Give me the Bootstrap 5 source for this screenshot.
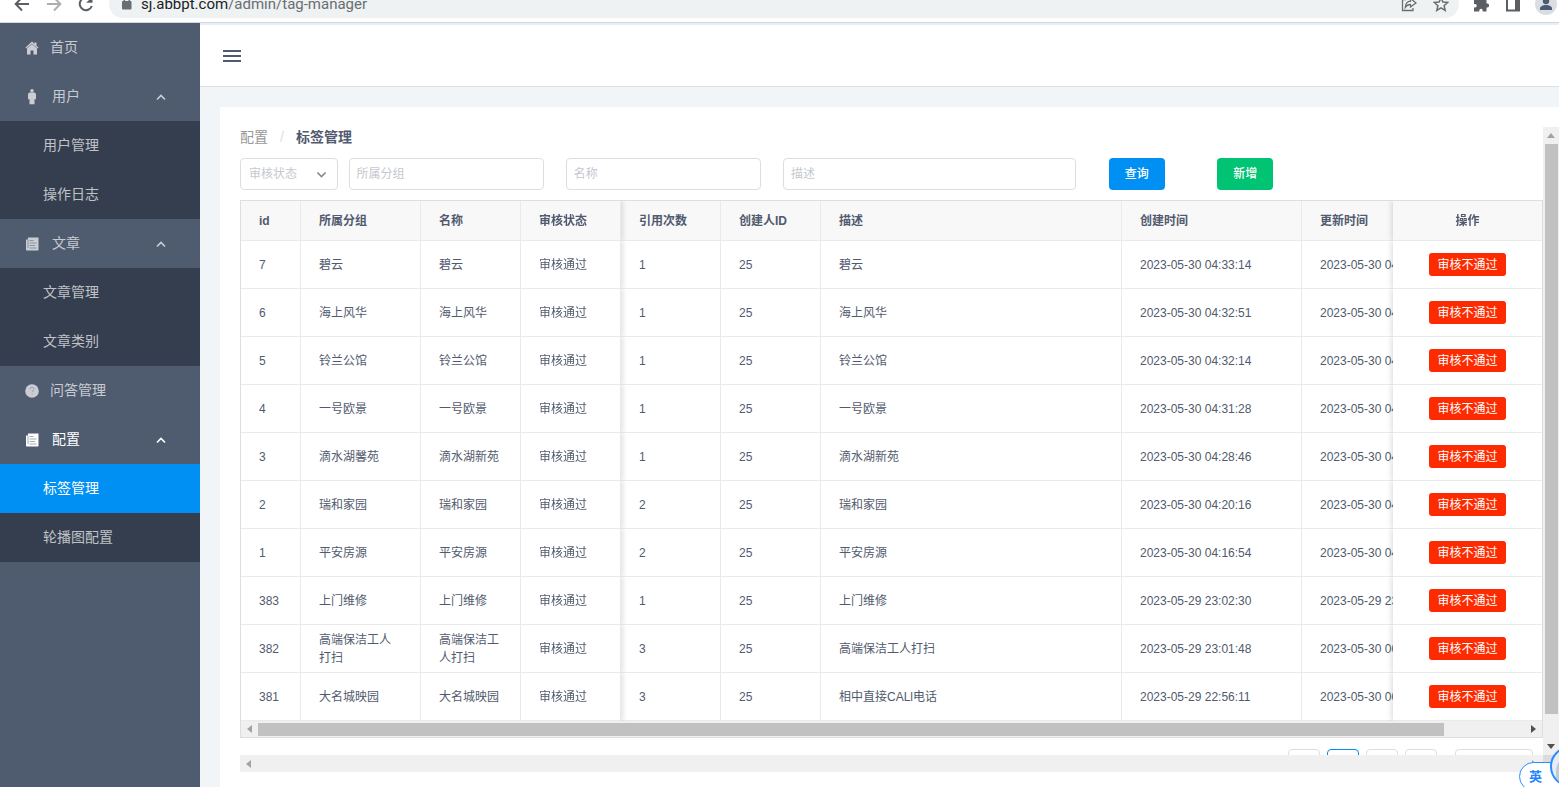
<!DOCTYPE html>
<html lang="zh-CN">
<head>
<meta charset="utf-8">
<meta name="viewport" content="width=device-width, initial-scale=1">
<title>标签管理</title>
<link href="https://cdn.jsdelivr.net/npm/bootstrap@5.3.0/dist/css/bootstrap.min.css" rel="stylesheet">
<style>
:root{--side:#4f5b6f;--side-sub:#343e4e;--blue:#008ff3;--line:#dcdee2;--cell:#e8eaec;--ink:#515a6e;--track:#f0f0f0;--thumb:#c1c1c1}
body{font-family:"Liberation Sans","Noto Sans CJK SC",sans-serif;font-size:14px;line-height:20px;color:var(--ink)}
svg{display:block;flex:none}
.shell{height:100vh}
/* browser toolbar */
.toolbar{height:23px;border-bottom:1px solid #d5d6d8;color:#5b5f64;padding:0 2px 4px 13px;gap:14px}
.toolbar button{background:none;border:0;padding:0;color:inherit}
.toolbar .tool{height:28px;display:flex;align-items:center;flex:none}
.omnibox{height:28px;background:#eef2f3;border-radius:14px;padding:0 10px 0 12px;font:15px/16px Roboto,sans-serif;color:#6a6e72}
.omnibox b{font-weight:400;color:#202124}
.avatar{width:22px;height:22px;background:#dadde2;color:#495a71}
/* side menu */
.side{width:200px;background:var(--side)}
.side a{display:flex;align-items:center;height:49px;padding:0 33px 1px 24px;color:rgba(255,255,255,.7);text-decoration:none}
.side a svg:first-child{margin-right:10px}
.side a.group svg:first-child{margin-right:12px}
.side .sub{background:var(--side-sub)}
.side .sub a{padding-left:43px}
.side .group.open{color:#fff}
.side .sub a.active{background:var(--blue);color:#fff}
/* page */
.page-main{background:#f2f5f8}
.top-bar{height:64px;background:#fff;border-top:2px solid #e3f0fb;border-bottom:1px solid #dcdee2;padding-left:23px}
.panel-box{margin:20px 0 0 20px;padding:20px 0 15px 20px}
.breadcrumb{font-size:14px;line-height:20px;margin-bottom:11px;--bs-breadcrumb-divider-color:#dcdee2;--bs-breadcrumb-item-padding-x:12px}
.breadcrumb a{color:#999;text-decoration:none}
.breadcrumb .active{color:var(--ink);font-weight:700}
.breadcrumb .active::before{font-weight:400}
.filters{margin-bottom:10px}
.filters .form-control,.filters .form-select{width:90%;height:32px;font-size:12px;line-height:20px;padding:5px 7px;border-color:var(--line);border-radius:4px;color:var(--ink)}
.filters .form-select{color:#c5c8ce;padding-left:8px;background-position:right 10px center;background-size:11px;--bs-form-select-bg-img:url("data:image/svg+xml,%3csvg xmlns='http://www.w3.org/2000/svg' viewBox='0 0 16 16'%3e%3cpath fill='none' stroke='%23808695' stroke-width='2.2' d='m2 5 6 6 6-6'/%3e%3c/svg%3e")}
.filters ::placeholder{color:#c5c8ce}
.filters .btn{width:56px;height:32px;font-size:12px;line-height:20px;padding:0;border:0;border-radius:4px;color:#fff;font-weight:500}
.btn-find{background:var(--blue)}
.btn-new{background:#00c373}
.grid-box{border:1px solid var(--line);border-bottom:0}
.grid-scroll{overflow-x:hidden}
.grid{width:100%;min-width:1390px;table-layout:fixed;border-collapse:separate;border-spacing:0;font-size:12px;line-height:18px}
.grid th,.grid td{height:48px;padding:0 18px;border-right:1px solid var(--cell);border-bottom:1px solid var(--cell);background:#fff;vertical-align:middle}
.grid th{height:40px;background:#f8f8f9;font-weight:700}
.grid .pin{position:sticky;z-index:1}
.grid .pin-1{left:0}.grid .pin-2{left:60px}.grid .pin-3{left:180px}.grid .pin-4{left:280px;box-shadow:2px 0 5px rgba(0,0,0,.12);clip-path:inset(0 -8px 0 0)}
.grid .pin-end{right:0;padding:0;border-right:0;text-align:center;box-shadow:-2px 0 5px rgba(0,0,0,.12);clip-path:inset(0 0 0 -8px)}
.grid .btn{background:#ff2b00;color:#fff;font-size:12px;line-height:17px;padding:4px 8px 2px;border:0;border-radius:3px}
.bar-h{height:17px;background:var(--track);color:#a3a3a3}
.bar-h .arrow{width:17px;display:flex;justify-content:center}
.bar-h .thumb{height:13px;background:var(--thumb)}
.bar-inner{border-bottom:1px solid var(--line)}
.dark-arrow{color:#505050}
.bar-v{width:16px;background:var(--track);color:#a3a3a3}
.bar-v .arrow{height:17px;display:flex;align-items:center}
.bar-v .thumb{width:13px;flex:0 1 570px;background:var(--thumb)}
.corner{width:16px;background:#dcdcdc}
.pager{margin-top:11px;padding-right:10px;gap:7px}
.pager .page-btn{width:32px;height:32px;border:1px solid var(--line);border-radius:4px;background:#fff;padding:0}
.pager .page-btn.current{border-color:var(--blue)}
.pager select{width:78px;height:32px;margin-left:11px;border:1px solid var(--line);border-radius:4px;background:#fff;appearance:none}
/* input method badge */
.ime{right:-10px;bottom:-4px;width:50px;height:29px;border:1px solid #2a8cff;border-radius:15px;background:#fff;color:#1f86ff;font-size:13px;font-weight:700;line-height:27px;padding-left:9px}
.ime-face{right:-32px;bottom:0;width:41px;height:41px;border:2px solid #2a8cff;border-radius:50%;background:#e9edf3}
</style>
</head>
<body>
<div class="shell d-flex flex-column overflow-hidden position-relative">
  <header class="toolbar d-flex align-items-end overflow-hidden flex-shrink-0 bg-white">
    <button class="tool" aria-label="后退"><svg width="18" height="18" viewBox="0 0 18 18" fill="none" stroke="currentColor" stroke-width="2"><path d="M16 9H3M9 2.500 2.700 9 9 15.500"/></svg></button>
    <button class="tool opacity-50" aria-label="前进"><svg width="18" height="18" viewBox="0 0 18 18" fill="none" stroke="currentColor" stroke-width="2"><path d="M2 9h13M9 2.500 15.300 9 9 15.500"/></svg></button>
    <button class="tool" aria-label="刷新"><svg width="18" height="18" viewBox="0 0 18 18" fill="none" stroke="currentColor" stroke-width="2"><path d="M14.800 11A6.200 6.200 0 1 1 13.500 4.700"/><path d="M15.500 1.500v6.300H9.200z" fill="currentColor" stroke="none"/></svg></button>
    <div class="omnibox d-flex align-items-center flex-grow-1">
      <svg width="12" height="16" viewBox="0 0 12 16"><rect x="1" y="5" width="9.500" height="8.500" rx="1" fill="currentColor"/><path d="M3.300 5V3a2.500 2.500 0 0 1 5 0v2" fill="none" stroke="currentColor" stroke-width="1.500"/></svg>
      <span class="ms-2 flex-grow-1"><b>sj.abbpt.com</b>/admin/tag-manager</span>
      <svg class="me-3" width="16" height="18" viewBox="0 0 16 18" fill="none" stroke="currentColor" stroke-width="1.300"><path d="M5 4.500H1.500V15.500H12V13"/><path d="M9.500 3.500 15 8l-5.500 4V9.500C7 9.300 5.500 10.500 4.300 12.300 4.500 9 6.500 6.500 9.500 6.200z"/></svg>
      <svg width="16" height="18" viewBox="0 0 16 18" fill="none" stroke="currentColor" stroke-width="1.500"><path d="m8 2.700 1.900 4.400 4.800.4-3.600 3.200 1.100 4.700L8 12.900l-4.200 2.500 1.100-4.700L1.300 7.500l4.800-.4z"/></svg>
    </div>
    <button class="tool" aria-label="扩展程序"><svg width="16" height="18" viewBox="0 0 16 18" fill="currentColor"><path d="M1 4.500h4.500V3.300a2 2 0 0 1 4 0v1.200H13.500V8.500h.6a2 2 0 0 1 0 4h-.6v4H9.700v-1a1.700 1.700 0 0 0-3.400 0v1H1v-4h1a1.700 1.700 0 0 0 0-3.600H1z"/></svg></button>
    <button class="tool" aria-label="侧边栏"><svg width="18" height="18" viewBox="0 0 18 18"><path fill="currentColor" fill-rule="evenodd" d="M3 2.500h14v14H3zM5 4.500v10h7v-10z"/></svg></button>
    <div class="tool"><div class="avatar rounded-circle"><svg width="22" height="22" viewBox="0 0 22 22" fill="currentColor"><circle cx="11" cy="8" r="3.200"/><path d="M5 17v-1.500c0-2 3-3.500 6-3.500s6 1.500 6 3.500V17z"/></svg></div></div>
  </header>

  <div class="d-flex flex-grow-1" style="min-height:0">
    <nav class="side flex-shrink-0" aria-label="主菜单">
      <a href="#"><svg width="16" height="16" viewBox="0 0 16 16" fill="currentColor"><path d="M8 2.500 1.500 8.500l.8 1L8 4.500l5.700 5 .8-1-2-1.800V3.500h-2v1.300z"/><path d="M3 9.500 8 5l5 4.500v6H9.500V11.500H6.500v4H3z"/></svg>首页</a>
      <a href="#" class="group"><svg width="16" height="17" viewBox="0 0 16 17" fill="currentColor"><circle cx="8" cy="2.700" r="1.700"/><path d="M5.500 4.600h5L12 5.800v5.500h-1.500v5h-5v-5H4V5.800z"/></svg>用户<svg class="ms-auto" width="12" height="12" viewBox="0 0 12 12" fill="none" stroke="currentColor" stroke-width="1.600"><path d="m2 9.500 4-4 4 4"/></svg></a>
      <div class="sub"><a href="#">用户管理</a><a href="#">操作日志</a></div>
      <a href="#" class="group"><svg width="16" height="16" viewBox="0 0 16 16"><path fill="currentColor" d="M4 2.500h10.500V15l-.5.500H2.500L2 15V4.500h2z"/><path d="M4 4.500V13M5.500 5.500h4M5.500 8h7M5.500 10.500H11M5.500 13h7" fill="none" stroke="#8d95a2"/></svg>文章<svg class="ms-auto" width="12" height="12" viewBox="0 0 12 12" fill="none" stroke="currentColor" stroke-width="1.600"><path d="m2 9.500 4-4 4 4"/></svg></a>
      <div class="sub"><a href="#">文章管理</a><a href="#">文章类别</a></div>
      <a href="#"><svg width="16" height="16" viewBox="0 0 16 16"><circle cx="8" cy="9" r="6.800" fill="currentColor"/><path d="M6 7.300c0-2.600 4-2.600 4 0 0 1.400-1.800 1.500-1.800 3M8.200 11.500v1.300" fill="none" stroke="#a3aab5" stroke-width="1.100"/></svg>问答管理</a>
      <a href="#" class="group open"><svg width="16" height="16" viewBox="0 0 16 16"><path fill="currentColor" d="M4 2.500h10.500V15l-.5.500H2.500L2 15V4.500h2z"/><path d="M4 4.500V13M5.500 5.500h4M5.500 8h7M5.500 10.500H11M5.500 13h7" fill="none" stroke="#a4abb6"/></svg>配置<svg class="ms-auto" width="12" height="12" viewBox="0 0 12 12" fill="none" stroke="currentColor" stroke-width="1.600"><path d="m2 9.500 4-4 4 4"/></svg></a>
      <div class="sub"><a href="#" class="active">标签管理</a><a href="#">轮播图配置</a></div>
    </nav>

    <main class="page-main d-flex flex-column flex-grow-1" style="min-width:0">
      <div class="top-bar d-flex align-items-center flex-shrink-0">
        <button class="btn p-0 border-0" aria-label="折叠菜单"><svg width="18" height="14" viewBox="0 0 18 14" fill="#515a6e"><path d="M0 1h18v2H0zM0 6h18v2H0zM0 11h18v2H0z"/></svg></button>
      </div>
      <section class="panel-box bg-white d-flex flex-column flex-grow-1" style="min-height:0">
        <div class="d-flex flex-grow-1" style="min-height:0">
          <div class="flex-grow-1 overflow-hidden" style="min-width:0">
            <ol class="breadcrumb"><li class="breadcrumb-item"><a href="#">配置</a></li><li class="breadcrumb-item active" aria-current="page">标签管理</li></ol>
            <form class="filters row g-0">
              <div class="col-1"><select class="form-select" aria-label="审核状态"><option>审核状态</option></select></div>
              <div class="col-2"><input class="form-control" type="text" placeholder="所属分组" aria-label="所属分组"></div>
              <div class="col-2"><input class="form-control" type="text" placeholder="名称" aria-label="名称"></div>
              <div class="col-3"><input class="form-control" type="text" placeholder="描述" aria-label="描述"></div>
              <div class="col-1"><button type="button" class="btn btn-find">查询</button></div>
              <div class="col-1"><button type="button" class="btn btn-new">新增</button></div>
            </form>
            <div class="grid-box">
              <div class="grid-scroll">
                <table class="grid">
                  <colgroup><col style="width:60px"><col style="width:120px"><col style="width:100px"><col style="width:100px"><col style="width:100px"><col style="width:100px"><col><col style="width:180px"><col style="width:180px"><col style="width:149px"></colgroup>
                  <thead><tr><th class="pin pin-1">id</th><th class="pin pin-2">所属分组</th><th class="pin pin-3">名称</th><th class="pin pin-4">审核状态</th><th>引用次数</th><th>创建人ID</th><th>描述</th><th>创建时间</th><th>更新时间</th><th class="pin pin-end">操作</th></tr></thead>
                  <tbody id="rows"></tbody>
                </table>
              </div>
              <div class="bar-h bar-inner d-flex align-items-center">
                <span class="arrow"><svg width="5" height="8" viewBox="0 0 5 8" fill="currentColor"><path d="M5 0v8L0 4z"/></svg></span>
                <div class="flex-grow-1"><div class="thumb" style="width:93.6%"></div></div>
                <span class="arrow dark-arrow"><svg width="5" height="8" viewBox="0 0 5 8" fill="currentColor"><path d="M0 0v8l5-4z"/></svg></span>
              </div>
            </div>
            <div class="pager d-flex justify-content-end">
              <button class="page-btn" aria-label="上一页"></button><button class="page-btn current" aria-label="第一页"></button><button class="page-btn" aria-label="第二页"></button><button class="page-btn" aria-label="下一页"></button>
              <select aria-label="每页条数"></select>
            </div>
          </div>
          <div class="bar-v d-flex flex-column align-items-center flex-shrink-0">
            <span class="arrow"><svg width="8" height="5" viewBox="0 0 8 5" fill="currentColor"><path d="M0 5h8L4 0z"/></svg></span>
            <div class="thumb"></div>
            <span class="arrow dark-arrow mt-auto"><svg width="8" height="5" viewBox="0 0 8 5" fill="currentColor"><path d="M0 0h8L4 5z"/></svg></span>
          </div>
        </div>
        <div class="d-flex flex-shrink-0">
          <div class="bar-h d-flex align-items-center justify-content-between flex-grow-1">
            <span class="arrow"><svg width="5" height="8" viewBox="0 0 5 8" fill="currentColor"><path d="M5 0v8L0 4z"/></svg></span>
            <span class="arrow"><svg width="5" height="8" viewBox="0 0 5 8" fill="currentColor"><path d="M0 0v8l5-4z"/></svg></span>
          </div>
          <div class="corner"></div>
        </div>
      </section>
    </main>
  </div>
  <div class="ime position-absolute">英</div>
  <div class="ime-face position-absolute overflow-hidden"><svg width="37" height="37" viewBox="0 0 37 37" fill="#c3cad5"><path d="M4 37V24c0-7 3-12 8-14v27z"/></svg></div>
</div>
<script src="https://cdn.jsdelivr.net/npm/bootstrap@5.3.0/dist/js/bootstrap.bundle.min.js"></script>
<script>
// id, group, name, reference count, description, created, updated
const tags = [
  [7,'碧云','碧云',1,'碧云','2023-05-30 04:33:14','2023-05-30 04:33:14'],
  [6,'海上风华','海上风华',1,'海上风华','2023-05-30 04:32:51','2023-05-30 04:32:51'],
  [5,'铃兰公馆','铃兰公馆',1,'铃兰公馆','2023-05-30 04:32:14','2023-05-30 04:32:14'],
  [4,'一号欧景','一号欧景',1,'一号欧景','2023-05-30 04:31:28','2023-05-30 04:31:28'],
  [3,'滴水湖馨苑','滴水湖新苑',1,'滴水湖新苑','2023-05-30 04:28:46','2023-05-30 04:28:46'],
  [2,'瑞和家园','瑞和家园',2,'瑞和家园','2023-05-30 04:20:16','2023-05-30 04:20:16'],
  [1,'平安房源','平安房源',2,'平安房源','2023-05-30 04:16:54','2023-05-30 04:16:54'],
  [383,'上门维修','上门维修',1,'上门维修','2023-05-29 23:02:30','2023-05-29 23:02:30'],
  [382,'高端保洁工人打扫','高端保洁工人打扫',3,'高端保洁工人打扫','2023-05-29 23:01:48','2023-05-30 00:01:48'],
  [381,'大名城映园','大名城映园',3,'相中直接CALl电话','2023-05-29 22:56:11','2023-05-30 00:56:11']
];
document.getElementById('rows').innerHTML = tags.map(([id, group, name, uses, text, made, changed]) => `<tr>
  <td class="pin pin-1">${id}</td><td class="pin pin-2">${group}</td><td class="pin pin-3">${name}</td><td class="pin pin-4">审核通过</td>
  <td>${uses}</td><td>25</td><td>${text}</td><td>${made}</td><td class="text-nowrap">${changed}</td>
  <td class="pin pin-end"><button class="btn">审核不通过</button></td></tr>`).join('');
</script>
</body>
</html>
